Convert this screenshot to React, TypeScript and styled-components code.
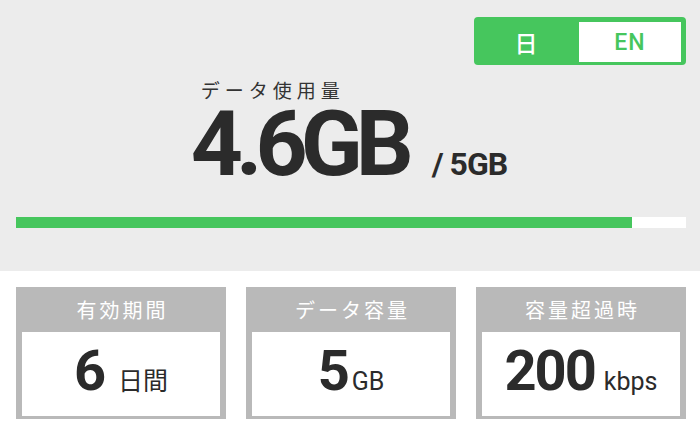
import styled, { createGlobalStyle } from "styled-components";

const GlobalStyle = createGlobalStyle`
  html, body {
    margin: 0;
    padding: 0;
    background: #ffffff;
  }
  body {
    font-family: Roboto, "Noto Sans CJK JP", sans-serif;
    color: #2a2a2a;
  }
`;

const GREEN = "#46c65d";
const GRAY = "#b9b9b9";

const Root = styled.div`
  width: 700px;
  height: 430px;
  display: flex;
  flex-direction: column;
  background: #ffffff;
`;

const UsageSection = styled.section`
  height: 271px;
  box-sizing: border-box;
  background: #ececec;
  padding: 17px 14px 0 16px;
  display: flex;
  flex-direction: column;
`;

const ToggleRow = styled.div`
  display: flex;
  justify-content: flex-end;
`;

const Toggle = styled.div`
  width: 212px;
  height: 48px;
  box-sizing: border-box;
  background: ${GREEN};
  border-radius: 4px;
  padding: 5px 5px 3px 0;
  display: flex;
`;

const ToggleOption = styled.div<{ $active?: boolean }>`
  flex: ${(p) => (p.$active ? "0 0 105px" : "1")};
  display: flex;
  align-items: center;
  justify-content: center;
  background: ${(p) => (p.$active ? "transparent" : "#ffffff")};
  color: ${(p) => (p.$active ? "#ffffff" : GREEN)};
  font-family: Roboto, "Noto Sans CJK JP", sans-serif;
  font-size: 23px;
  font-weight: 500;
  letter-spacing: 1px;
`;

const Usage = styled.div`
  align-self: center;
  display: flex;
  flex-direction: column;
  margin-top: 14px;
  margin-left: -4px;
`;

const UsageLabel = styled.div`
  font-family: "Noto Sans CJK JP", sans-serif;
  font-size: 19px;
  line-height: 22px;
  color: #333333;
  padding-left: 10px;
  letter-spacing: 5px;
`;

const UsageNumbers = styled.div`
  display: flex;
  align-items: baseline;
  margin-top: 5px;
`;

const UsageValue = styled.span`
  font-family: Roboto, sans-serif;
  font-weight: 700;
  font-size: 91px;
  line-height: 76px;
  letter-spacing: -7px;
  color: #2b2b2b;
`;

const UsageTotal = styled.span`
  font-family: Roboto, sans-serif;
  font-weight: 700;
  font-size: 32px;
  line-height: 36px;
  letter-spacing: -1px;
  margin-left: 25px;
  color: #2b2b2b;
`;

const Bar = styled.div`
  margin-top: 35px;
  height: 11px;
  background: #ffffff;
  display: flex;
`;

const BarFill = styled.div`
  height: 100%;
  background: ${GREEN};
`;

const Cards = styled.section`
  display: grid;
  grid-template-columns: repeat(3, 1fr);
  column-gap: 20px;
  padding: 16px 14px 0 16px;
`;

const CardRoot = styled.div`
  height: 132px;
  box-sizing: border-box;
  background: ${GRAY};
  padding: 0 6px 3px 6px;
  display: flex;
  flex-direction: column;
`;

const CardTitle = styled.div`
  height: 45px;
  display: flex;
  align-items: center;
  justify-content: center;
  font-family: "Noto Sans CJK JP", sans-serif;
  font-size: 20px;
  color: #ffffff;
  letter-spacing: 3px;
  padding-left: 3px;
`;

const CardBody = styled.div`
  flex: 1;
  background: #ffffff;
  display: flex;
  align-items: baseline;
  justify-content: center;
  padding-top: 4px;
  box-sizing: border-box;
`;

const CardValue = styled.span<{ $condensed?: boolean }>`
  font-family: Roboto, sans-serif;
  font-weight: 700;
  font-size: 56px;
  line-height: 70px;
  letter-spacing: ${(p) => (p.$condensed ? "-2px" : "0")};
  color: #2b2b2b;
`;

const CardUnit = styled.span<{ $gap: number }>`
  font-family: Roboto, "Noto Sans CJK JP", sans-serif;
  font-size: 25px;
  margin-left: ${(p) => p.$gap}px;
  color: #2b2b2b;
`;

interface CardProps {
  title: string;
  value: string;
  unit: string;
  gap: number;
  condensed?: boolean;
}

const Card = ({ title, value, unit, gap, condensed }: CardProps) => {
  return (
    <CardRoot>
      <CardTitle>{title}</CardTitle>
      <CardBody>
        <CardValue $condensed={condensed}>{value}</CardValue>
        <CardUnit $gap={gap}>{unit}</CardUnit>
      </CardBody>
    </CardRoot>
  );
};

const cards: CardProps[] = [
  { title: "有効期間", value: "6", unit: "日間", gap: 12 },
  { title: "データ容量", value: "5", unit: "GB", gap: 2 },
  { title: "容量超過時", value: "200", unit: "kbps", gap: 9, condensed: true },
];

const used = 4.6;
const total = 5;

const App = () => {
  return (
    <Root>
      <GlobalStyle />
      <UsageSection>
        <ToggleRow>
          <Toggle>
            <ToggleOption $active>日</ToggleOption>
            <ToggleOption>EN</ToggleOption>
          </Toggle>
        </ToggleRow>
        <Usage>
          <UsageLabel>データ使用量</UsageLabel>
          <UsageNumbers>
            <UsageValue>{used}GB</UsageValue>
            <UsageTotal>/ {total}GB</UsageTotal>
          </UsageNumbers>
        </Usage>
        <Bar>
          <BarFill style={{ width: `${(used / total) * 100}%` }} />
        </Bar>
      </UsageSection>
      <Cards>
        {cards.map((card, index) => (
          <Card key={index} {...card} />
        ))}
      </Cards>
    </Root>
  );
};

export default App;
